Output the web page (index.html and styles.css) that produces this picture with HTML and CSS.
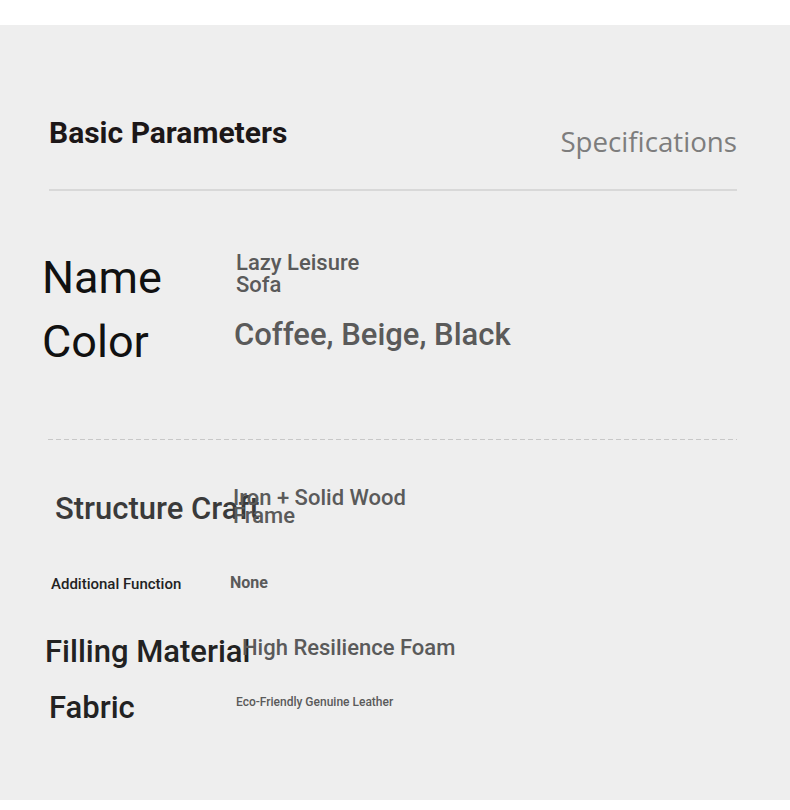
FILE: index.html
```html
<!DOCTYPE html>
<html lang="en">
<head>
<meta charset="utf-8">
<title>Basic Parameters</title>
<link rel="stylesheet" href="styles.css">
</head>
<body>
<main class="panel">
  <header class="head">
    <h1 class="title">Basic Parameters</h1>
    <p class="subtitle">Specifications</p>
  </header>
  <div class="rule"></div>

  <section class="group">
    <div class="row row-name">
      <div class="label">Name</div>
      <div class="value">Lazy Leisure Sofa</div>
    </div>
    <div class="row row-color">
      <div class="label">Color</div>
      <div class="value">Coffee, Beige, Black</div>
    </div>
  </section>

  <div class="dash"></div>

  <section class="group">
    <div class="row row-structure">
      <div class="label">Structure Craft</div>
      <div class="value">Iron + Solid Wood Frame</div>
    </div>
    <div class="row row-extra">
      <div class="label">Additional Function</div>
      <div class="value">None</div>
    </div>
    <div class="row row-filling">
      <div class="label">Filling Material</div>
      <div class="value">High Resilience Foam</div>
    </div>
    <div class="row row-fabric">
      <div class="label">Fabric</div>
      <div class="value">Eco-Friendly Genuine Leather</div>
    </div>
  </section>
</main>
</body>
</html>
```

FILE: styles.css
```css
* { box-sizing: border-box; }

html, body {
  margin: 0;
  padding: 0;
  background: #ffffff;
}

body {
  padding-top: 25px;
  font-family: Roboto, "Liberation Sans", sans-serif;
}

.panel {
  background: #eeeeee;
  height: 775px;
  overflow: hidden;
}

/* header */
.head {
  display: flex;
  justify-content: space-between;
  align-items: flex-start;
  padding: 93px 53px 0 49px;
}

.title {
  margin: 0;
  font-family: Roboto, "Liberation Sans", sans-serif;
  font-weight: 700;
  font-size: 30px;
  line-height: 1;
  color: #1c1718;
}

.subtitle {
  margin: 10px 0 0;
  font-family: "Open Sans", "Noto Sans", sans-serif;
  font-weight: 400;
  font-size: 27.7px;
  line-height: 1;
  color: #7d7d7d;
}

.rule {
  margin: 33px 53px 0 49px;
  border-top: 2px solid #d8d8d8;
}

.dash {
  margin: 75px 53px 0 48px;
  height: 1px;
  background: repeating-linear-gradient(to right, #c8c8c8 0 5px, transparent 5px 8px);
}

/* rows */
.row {
  display: flex;
  align-items: flex-start;
}

.label {
  flex: none;
  white-space: nowrap;
  line-height: 1;
}

.value {
  color: #5a5a5a;
  line-height: 1;
}

.row-name { padding-top: 60px; }
.row-name .label {
  width: 236px;
  padding-left: 42px;
  margin-top: 4px;
  font-size: 45px;
  color: #111111;
}
.row-name .value {
  width: 140px;
  margin-top: 1px;
  font-size: 22px;
  line-height: 22px;
  font-weight: 500;
}

.row-color { padding-top: 19px; }
.row-color .label {
  width: 234px;
  padding-left: 42px;
  font-size: 45px;
  color: #111111;
}
.row-color .value {
  margin-top: 0;
  font-size: 31px;
  font-weight: 500;
}

.row-structure { padding-top: 49px; }
.row-structure .label {
  width: 233px;
  padding-left: 55px;
  margin-top: 4px;
  font-size: 31px;
  color: #3a3a3a;
  font-weight: 500;
}
.row-structure .value {
  width: 200px;
  margin-top: 0;
  font-size: 22px;
  line-height: 18.5px;
  font-weight: 500;
}

.row-extra { padding-top: 49px; }
.row-extra .label {
  width: 230px;
  padding-left: 51px;
  margin-top: 2px;
  font-size: 15px;
  font-weight: 500;
  color: #222222;
}
.row-extra .value {
  font-size: 16px;
  font-weight: 700;
}

.row-filling { padding-top: 43px; }
.row-filling .label {
  width: 242px;
  padding-left: 45px;
  margin-top: 1px;
  font-size: 31px;
  font-weight: 500;
  color: #222222;
}
.row-filling .value {
  margin-top: 2px;
  font-size: 22px;
  font-weight: 500;
}

.row-fabric { padding-top: 25px; }
.row-fabric .label {
  width: 236px;
  padding-left: 49px;
  font-size: 31px;
  font-weight: 500;
  color: #222222;
}
.row-fabric .value {
  margin-top: 4px;
  font-size: 12px;
  font-weight: 500;
}
```
